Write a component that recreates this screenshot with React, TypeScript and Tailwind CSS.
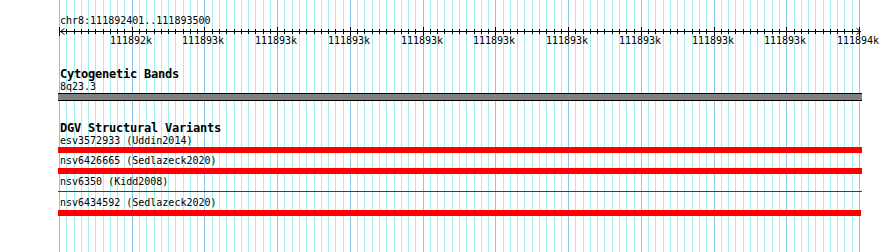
const LEFT = 59;
const SPAN = 800;
const MINOR = 110;

const minorX = Array.from({ length: MINOR + 1 }, (_, j) => Math.round(LEFT + (j * SPAN) / MINOR));

const LABELS = [
  "111892k",
  "111893k",
  "111893k",
  "111893k",
  "111893k",
  "111893k",
  "111893k",
  "111893k",
  "111893k",
  "111893k",
  "111894k",
];

type Feature = { name: string; thin?: boolean; short?: boolean };

const FEATURES: Feature[] = [
  { name: "esv3572933 (Uddin2014)" },
  { name: "nsv6426665 (Sedlazeck2020)" },
  { name: "nsv6350 (Kidd2008)", thin: true },
  { name: "nsv6434592 (Sedlazeck2020)", short: true },
];

function Grid() {
  return (
    <svg className="absolute inset-0" width={890} height={252} shapeRendering="crispEdges">
      {minorX.map((x, j) => (
        <rect key={j} x={x} y={0} width={1} height={252} fill={j % 10 === 0 ? "#8cc8ec" : "#a6eef0"} />
      ))}
    </svg>
  );
}

function Ruler() {
  return (
    <svg width={890} height={41} className="block" shapeRendering="crispEdges">
      <rect x={60} y={4} width={801} height={1} fill="#000" />
      {minorX.map((x, j) =>
        j % 10 === 0 ? (
          <rect key={j} x={x} y={0} width={1} height={9} fill="#000" />
        ) : (
          <rect key={j} x={x} y={2} width={1} height={5} fill="#000" />
        )
      )}
      <path d="M60.5 4.5 L64.5 1.5 M60.5 4.5 L64.5 7.5" stroke="#000" strokeWidth={1} fill="none" shapeRendering="auto" />
      <path d="M860.5 4.5 L856.5 1.5 M860.5 4.5 L856.5 7.5" stroke="#000" strokeWidth={1} fill="none" shapeRendering="auto" />
      {LABELS.map((label, i) => (
        <text
          key={i}
          x={minorX[(i + 1) * 10] - 1}
          y={17}
          textAnchor="middle"
          fontFamily="'DejaVu Sans Mono', monospace"
          fontSize={10}
          fill="#000"
        >
          {label}
        </text>
      ))}
    </svg>
  );
}

function FeatureRow({ feature, first }: { feature: Feature; first: boolean }) {
  return (
    <div>
      <div className={`pl-[2px] ${first ? "h-[12px] leading-[12px]" : "h-[15px] leading-[15px]"}`}>
        {feature.name}
      </div>
      {feature.thin ? (
        <div className="h-[6px] pt-[2px]">
          <div className="h-px w-[804px] bg-[#d40000]" />
        </div>
      ) : (
        <div className={`h-[6px] bg-[#ff0000] ${feature.short ? "w-[803px]" : "w-[804px]"}`} />
      )}
    </div>
  );
}

export default function App() {
  return (
    <div className="relative w-[890px] h-[252px] overflow-hidden bg-white text-black font-['DejaVu_Sans_Mono',monospace] text-[10px]">
      <Grid />
      <div className="relative">
        <div className="pt-[15px] pl-[60px] h-[27px] leading-[12px]">chr8:111892401..111893500</div>
        <Ruler />

        <div className="pl-[58px]">
          <div className="pl-[2px] h-[13px] leading-[13px] text-[12px] font-bold tracking-[-0.22px]">
            Cytogenetic Bands
          </div>
          <div className="pl-[2px] h-[11px] leading-[11px]">8q23.3</div>
          <div className="mt-[1px] h-[8px] w-[804px] border-y border-black bg-[#808080]" />

          <div className="mt-[21px] pl-[2px] h-[13px] leading-[13px] text-[12px] font-bold tracking-[-0.22px]">
            DGV Structural Variants
          </div>
          {FEATURES.map((f, i) => (
            <FeatureRow key={i} feature={f} first={i === 0} />
          ))}
        </div>
      </div>
    </div>
  );
}
